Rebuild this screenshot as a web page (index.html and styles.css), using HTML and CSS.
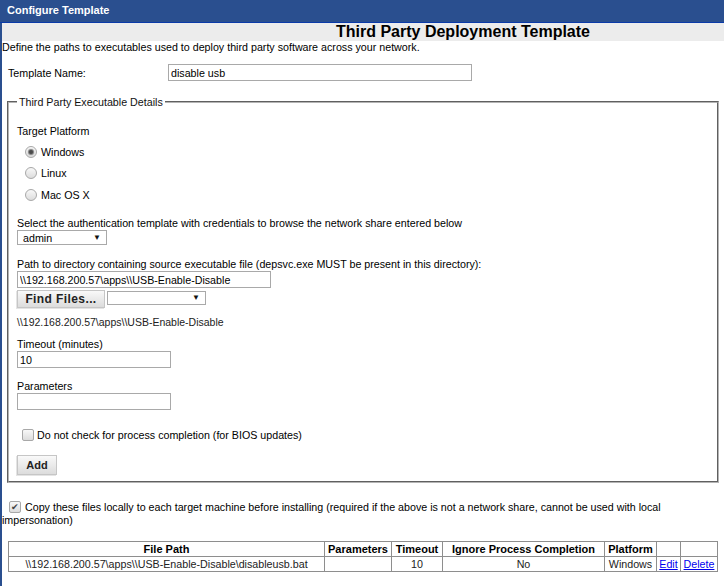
FILE: index.html
```html
<!DOCTYPE html>
<html>
<head>
<meta charset="utf-8">
<title>Configure Template</title>
<link rel="stylesheet" href="styles.css">
</head>
<body>
<div class="titlebar">Configure Template</div>
<div class="page">
  <div class="banner"><h1 class="banner-title">Third Party Deployment Template</h1></div>
  <p class="intro">Define the paths to executables used to deploy third party software across your network.</p>
  <div class="name-row">
    <span class="name-label">Template Name:</span>
    <input class="field field-name" type="text" value="disable usb">
  </div>

  <fieldset class="details">
    <legend class="details-legend">Third Party Executable Details</legend>
    <div class="lbl platform-label">Target Platform</div>
    <div class="radio-row r1"><span class="radio checked"></span><span>Windows</span></div>
    <div class="radio-row r2"><span class="radio"></span><span>Linux</span></div>
    <div class="radio-row r3"><span class="radio"></span><span>Mac OS X</span></div>

    <div class="lbl auth-label">Select the authentication template with credentials to browse the network share entered below</div>
    <div class="select-box select-auth"><span>admin</span><span class="arrow">&#9660;</span></div>

    <div class="lbl path-label">Path to directory containing source executable file (depsvc.exe MUST be present in this directory):</div>
    <input class="field field-path" type="text" value="\\192.168.200.57\apps\\USB-Enable-Disable">
    <div class="find-row">
      <button class="btn btn-find" type="button">Find Files...</button>
      <div class="select-box select-files"><span></span><span class="arrow">&#9660;</span></div>
    </div>
    <div class="path-note">\\192.168.200.57\apps\\USB-Enable-Disable</div>

    <div class="lbl timeout-label">Timeout (minutes)</div>
    <input class="field field-small" type="text" value="10">

    <div class="lbl params-label">Parameters</div>
    <input class="field field-small" type="text" value="">

    <div class="check-row"><span class="checkbox"></span><span>Do not check for process completion (for BIOS updates)</span></div>

    <button class="btn btn-add" type="button">Add</button>
  </fieldset>

  <p class="copy-note"><span class="checkbox checked inline-check"><span class="tick">&#10004;</span></span>Copy these files locally to each target machine before installing (required if the above is not a network share, cannot be used with local<br>impersonation)</p>

  <table class="files">
    <colgroup>
      <col class="c-path"><col class="c-params"><col class="c-timeout"><col class="c-ignore"><col class="c-platform"><col class="c-edit"><col class="c-delete">
    </colgroup>
    <tr>
      <th>File Path</th><th>Parameters</th><th>Timeout</th><th>Ignore Process Completion</th><th>Platform</th><th></th><th></th>
    </tr>
    <tr>
      <td>\\192.168.200.57\apps\\USB-Enable-Disable\disableusb.bat</td><td></td><td>10</td><td>No</td><td>Windows</td><td><a href="#">Edit</a></td><td><a href="#">Delete</a></td>
    </tr>
  </table>
</div>
</body>
</html>
```

FILE: styles.css
```css
* { box-sizing: border-box; }
html, body { margin: 0; padding: 0; background: #fff; }
body {
  font-family: "Liberation Sans", Arial, sans-serif;
  font-size: 10.7px;
  color: #000;
  width: 724px;
  height: 586px;
  overflow: hidden;
}
.titlebar {
  height: 23px;
  background: #2a4f8f;
  border-bottom: 1px solid #0a3aa8;
  color: #fff;
  font-weight: bold;
  font-size: 11px;
  line-height: 21px;
  padding-left: 7px;
}
.page {
  border-left: 2px solid #2a4f8f;
  min-height: 563px;
}
.banner {
  height: 18px;
  background: #ececec;
  padding-left: 334px;
}
.banner-title {
  margin: 0;
  font-size: 16px;
  line-height: 18px;
  font-weight: bold;
}
.intro { margin: 0; line-height: 12px; }
.name-row {
  display: flex;
  align-items: center;
  margin-top: 11px;
  padding-left: 6px;
}
.name-label { width: 160px; }
.field {
  display: block;
  font: inherit;
  font-size: 10.7px;
  height: 17px;
  border: 1px solid #a9a9a9;
  padding: 0 2px;
  margin: 0;
  color: #000;
  background: #fff;
  outline: none;
}
.field-name { width: 304px; }
.details {
  margin: 15px 5px 0;
  padding: 0 8px 6px;
  border: 2px groove #b4b4b4;
  min-width: 0;
}
.details-legend {
  padding: 0 2px;
  line-height: 12px;
  color: #111;
}
.lbl { line-height: 12px; }
.platform-label { margin-top: 17px; }
.radio-row {
  display: flex;
  align-items: center;
  gap: 4px;
  height: 12px;
  margin-top: 9px;
  padding-left: 8px;
}
.r3 { margin-top: 10px; }
.radio {
  width: 12px;
  height: 12px;
  border-radius: 50%;
  border: 1px solid #a8a8a8;
  background: linear-gradient(#f8f8f8, #dcdcdc);
  display: flex;
  align-items: center;
  justify-content: center;
}
.radio.checked::after {
  content: "";
  width: 4px;
  height: 4px;
  border-radius: 50%;
  background: #4a4a4a;
  box-shadow: 0 0 1px 1px #7a7a7a;
}
.auth-label { margin-top: 16px; }
.select-box {
  display: flex;
  align-items: center;
  justify-content: space-between;
  height: 15px;
  border: 1px solid #a9a9a9;
  background: #fff;
  padding: 0 5px 0 5px;
}
.arrow { font-size: 8px; line-height: 8px; color: #111; }
.select-auth { width: 90px; margin-top: 1px; }
.path-label { margin-top: 13px; }
.field-path { width: 254px; margin-top: 1px; }
.find-row {
  display: flex;
  align-items: flex-start;
  gap: 2px;
  margin-top: 2px;
}
.btn {
  font-family: "Liberation Sans", Arial, sans-serif;
  font-weight: bold;
  color: #222;
  border: 1px solid #c6c6c6;
  background: linear-gradient(#f9f9f9, #dcdcdc);
  box-shadow: -1px 1px 0 #e4e4e4;
  padding: 0;
  margin: 0;
  cursor: default;
}
.btn-find {
  width: 88px;
  height: 18px;
  font-size: 12px;
  letter-spacing: 0.4px;
}
.select-files { width: 99px; height: 14px; margin-top: 1px; }
.path-note {
  margin-top: 8px;
  line-height: 12px;
  font-size: 10.5px;
  color: #222;
}
.timeout-label { margin-top: 10px; }
.field-small { width: 154px; margin-top: 1px; }
.params-label { margin-top: 12px; }
.check-row {
  display: flex;
  align-items: center;
  gap: 3px;
  height: 13px;
  margin-top: 18px;
  padding-left: 5px;
}
.checkbox {
  display: inline-flex;
  align-items: center;
  justify-content: center;
  width: 12px;
  height: 12px;
  border: 1px solid #a8a8a8;
  border-radius: 2px;
  background: linear-gradient(#f8f8f8, #dcdcdc);
}
.tick { font-size: 9px; line-height: 9px; color: #444; }
.btn-add {
  display: block;
  width: 40px;
  height: 20px;
  font-size: 11px;
  margin-top: 14px;
}
.copy-note {
  margin: 18px 0 0;
  line-height: 13px;
}
.inline-check {
  vertical-align: top;
  margin: 0 4px 0 7px;
}
.files {
  margin: 14px 0 0 6px;
  border-collapse: collapse;
  table-layout: fixed;
  width: 709px;
}
.files th, .files td {
  border: 1px solid #8e8e8e;
  height: 15px;
  padding: 0 2px;
  line-height: 13px;
  text-align: center;
  white-space: nowrap;
  overflow: hidden;
}
.files th { font-weight: bold; font-size: 11px; }
.files td { color: #222; font-size: 10.7px; }
.files a { color: #0000ee; text-decoration: underline; }
.c-path { width: 316px; }
.c-params { width: 67px; }
.c-timeout { width: 51px; }
.c-ignore { width: 162px; }
.c-platform { width: 52px; }
.c-edit { width: 24px; }
.c-delete { width: 37px; }
```
